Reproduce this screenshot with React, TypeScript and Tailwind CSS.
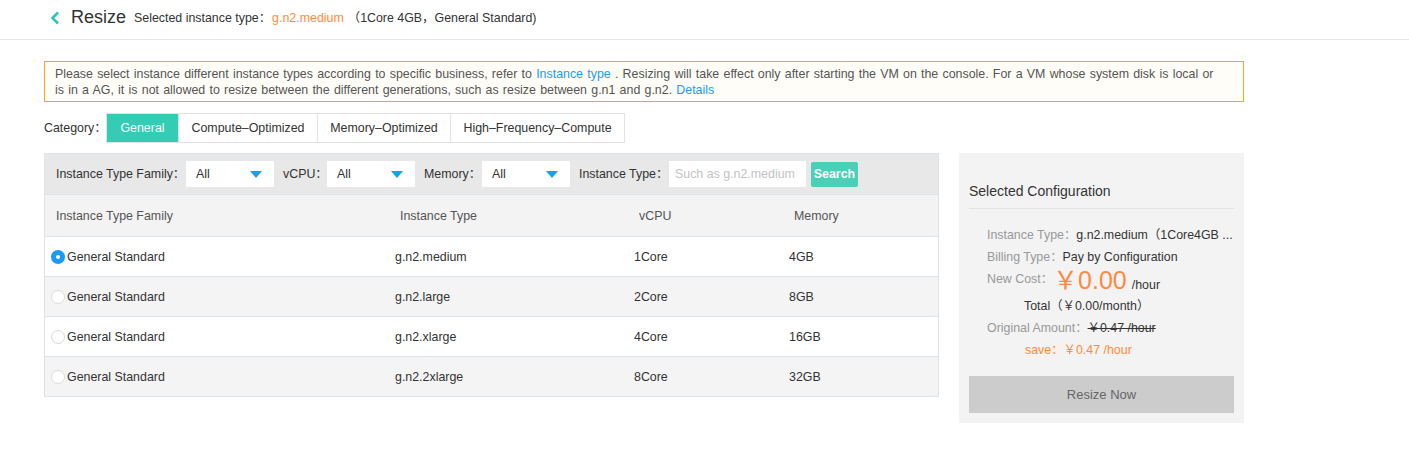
import React from "react";

const rows = [
  { fam: "General Standard", type: "g.n2.medium", cpu: "1Core", mem: "4GB", sel: true },
  { fam: "General Standard", type: "g.n2.large", cpu: "2Core", mem: "8GB" },
  { fam: "General Standard", type: "g.n2.xlarge", cpu: "4Core", mem: "16GB" },
  { fam: "General Standard", type: "g.n2.2xlarge", cpu: "8Core", mem: "32GB" },
];

function Caret() {
  return (
    <svg width="12" height="7" viewBox="0 0 12 7">
      <path d="M0 0 L12 0 L6 7 Z" fill="#0ea5e9" />
    </svg>
  );
}

function Select({ w }: { w: string }) {
  return (
    <div className={`${w} h-[26px] bg-white flex items-center justify-between pl-[10px] pr-[12px] text-[#333]`}>
      <span>All</span>
      <Caret />
    </div>
  );
}

export default function App() {
  return (
    <div
      className="w-[1409px] h-[469px] bg-white text-[12.4px] text-[#333]"
      style={{ fontFamily: '"Liberation Sans", Arial, "Noto Sans CJK SC", sans-serif' }}
    >
      {/* header */}
      <div className="h-[40px] border-b border-[#e6e6e6] flex items-center pl-[49px]">
        <svg width="12" height="14" viewBox="0 0 12 14" className="mr-[10px] mt-[-3px]">
          <path d="M9 1.5 L3.5 7 L9 12.5" fill="none" stroke="#2ec7b0" strokeWidth="2.6" />
        </svg>
        <span className="text-[18px] text-[#333] mr-[8px] mt-[-5px]">Resize</span>
        <span className="text-[12.4px] text-[#333] mt-[-3px]">Selected instance type：</span>
        <span className="text-[12.4px] text-[#ff8a3d] mt-[-3px] ml-[1px]">g.n2.medium</span>
        <span className="text-[12.4px] text-[#333] mt-[-3px] ml-[4px]">（1Core 4GB，General Standard)</span>
      </div>

      <div className="pl-[44px] pt-[21px]">
        {/* alert */}
        <div className="w-[1200px] h-[41px] border border-[#f5a623] bg-[#fffdf7] pl-[10px] pt-[4px] leading-[16px] text-[#555] whitespace-nowrap [word-spacing:0.8px]">
          <div>
            Please select instance different instance types according to specific business, refer to{" "}
            <span className="text-[#1a9bf5]">Instance type</span> . Resizing will take effect only after starting the VM on the console. For a VM whose system disk is local or
          </div>
          <div>
            is in a AG, it is not allowed to resize between the different generations, such as resize between g.n1 and g.n2. <span className="text-[#1a9bf5]">Details</span>
          </div>
        </div>

        {/* category */}
        <div className="flex items-center mt-[11px] h-[30px]">
          <span className="w-[62px] text-[#333]">Category：</span>
          <div className="flex h-[30px] border border-[#e2e2e2]">
            <div className="w-[71px] bg-[#33ccb4] text-white flex items-center justify-center">General</div>
            <div className="w-[139px] border-l border-[#e2e2e2] flex items-center justify-center">Compute–Optimized</div>
            <div className="w-[133px] border-l border-[#e2e2e2] flex items-center justify-center">Memory–Optimized</div>
            <div className="w-[174px] border-l border-[#e2e2e2] flex items-center justify-center">High–Frequency–Compute</div>
          </div>
        </div>

        <div className="flex mt-[10px] items-start">
          {/* table */}
          <div className="w-[895px] border-l border-r border-[#dde3ea]">
            <div className="h-[41px] bg-[#e8e8e8] border-t border-[#dde3ea] flex items-center pl-[11px] text-[#333]">
              <span className="w-[130px]">Instance Type Family：</span>
              <Select w="w-[88px]" />
              <span className="w-[53px] pl-[9px]">vCPU：</span>
              <Select w="w-[88px]" />
              <span className="w-[67px] pl-[9px]">Memory：</span>
              <Select w="w-[88px]" />
              <span className="w-[99px] pl-[9px]">Instance Type：</span>
              <div className="w-[137px] h-[26px] bg-white flex items-center pl-[6px] text-[#c4c4c4]">Such as g.n2.medium</div>
              <div className="ml-[5px] w-[47px] h-[25px] bg-[#49d0b6] rounded-[2px] text-white font-bold flex items-center justify-center">Search</div>
            </div>
            <div className="h-[43px] bg-[#f3f3f3] border-t border-b border-[#dde3ea] grid grid-cols-[344px_239px_155px_1fr] items-center text-[#555] pt-[1px]">
              <div className="pl-[11px]">Instance Type Family</div>
              <div className="pl-[11px]">Instance Type</div>
              <div className="pl-[11px]">vCPU</div>
              <div className="pl-[11px]">Memory</div>
            </div>
            {rows.map((r, i) => (
              <div
                key={i}
                className={`h-[40px] border-b border-[#dde3ea] grid grid-cols-[339px_239px_155px_1fr] items-center text-[#333] pt-[1px] ${i % 2 === 1 ? "bg-[#f4f4f4]" : "bg-white"}`}
              >
                <div className="flex items-center pl-[6px]">
                  {r.sel ? (
                    <span className="w-[14px] h-[14px] rounded-full bg-[#1a9bf5] flex items-center justify-center mr-[2px]">
                      <span className="w-[4px] h-[4px] rounded-full bg-white" />
                    </span>
                  ) : (
                    <span className="w-[14px] h-[14px] rounded-full border border-[#dadada] bg-white mr-[2px]" />
                  )}
                  <span>{r.fam}</span>
                </div>
                <div className="pl-[11px]">{r.type}</div>
                <div className="pl-[11px]">{r.cpu}</div>
                <div className="pl-[11px]">{r.mem}</div>
              </div>
            ))}
          </div>

          {/* right panel */}
          <div className="ml-[20px] w-[285px] h-[270px] bg-[#f3f3f3] px-[10px] pt-[28px]">
            <div className="text-[14px] text-[#333] pb-[6px] border-b border-[#e3e3e3]">Selected Configuration</div>
            <div className="pl-[18px] pt-[15px] leading-[22px]">
              <div className="flex">
                <span className="text-[#999]">Instance Type：</span>
                <span className="text-[#333]">g.n2.medium（1Core4GB ...</span>
              </div>
              <div className="flex">
                <span className="text-[#999]">Billing Type：</span>
                <span className="text-[#333]">Pay by Configuration</span>
              </div>
              <div className="flex items-start h-[27px]">
                <span className="text-[#999]">New Cost：</span>
                <span className="text-[#ff8a3d] text-[25px] leading-[26px] mt-[-1px]">￥0.00</span>
                <span className="text-[#333] ml-[5px] mt-[6px]">/hour</span>
              </div>
              <div className="pl-[37px]">Total（￥0.00/month）</div>
              <div className="flex">
                <span className="text-[#999]">Original Amount：</span>
                <span className="text-[#333] line-through">￥0.47 /hour</span>
              </div>
              <div className="pl-[38px] text-[#ff8a3d]">save：￥0.47 /hour</div>
            </div>
            <div className="mt-[15px] h-[37px] bg-[#cccccc] flex items-center justify-center text-[13px] text-[#666]">Resize Now</div>
          </div>
        </div>
      </div>
    </div>
  );
}
